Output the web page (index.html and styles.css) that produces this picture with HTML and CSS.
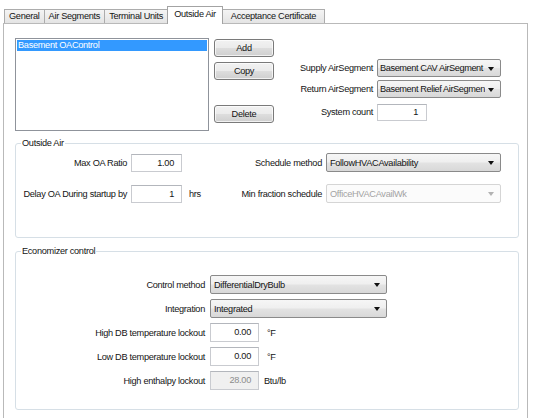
FILE: index.html
```html
<!DOCTYPE html>
<html>
<head>
<meta charset="utf-8">
<title>Outside Air</title>
<link rel="stylesheet" href="styles.css">
</head>
<body>
<div class="tabs">
  <div class="tab">General</div>
  <div class="tab">Air Segments</div>
  <div class="tab">Terminal Units</div>
  <div class="tab active">Outside Air</div>
  <div class="tab tab-wide">Acceptance Certificate</div>
</div>
<div class="page">
  <div class="top">
    <div class="list">
      <div class="item selected">Basement OAControl</div>
    </div>
    <div class="buttons">
      <button class="btn">Add</button>
      <button class="btn">Copy</button>
      <button class="btn btn-delete">Delete</button>
    </div>
    <div class="seg-form">
      <label class="lbl">Supply AirSegment</label>
      <div class="combo"><span class="combo-text">Basement CAV AirSegment</span><span class="arrow"></span></div>
      <label class="lbl">Return AirSegment</label>
      <div class="combo"><span class="combo-text">Basement Relief AirSegment</span><span class="arrow"></span></div>
      <label class="lbl lbl-count">System count</label>
      <div class="field field-count">1</div>
    </div>
  </div>

  <fieldset class="group group-oa">
    <legend>Outside Air</legend>
    <div class="oa-grid">
      <label class="lbl">Max OA Ratio</label>
      <div class="field">1.00</div>
      <span></span>
      <label class="lbl">Schedule method</label>
      <div class="combo"><span class="combo-text">FollowHVACAvailability</span><span class="arrow"></span></div>

      <label class="lbl">Delay OA During startup by</label>
      <div class="field">1</div>
      <span class="unit unit-hrs">hrs</span>
      <label class="lbl">Min fraction schedule</label>
      <div class="combo disabled"><span class="combo-text">OfficeHVACAvailWk</span><span class="arrow"></span></div>
    </div>
  </fieldset>

  <fieldset class="group group-econ">
    <legend>Economizer control</legend>
    <div class="econ-grid">
      <label class="lbl">Control method</label>
      <div class="ctl"><div class="combo combo-wide"><span class="combo-text">DifferentialDryBulb</span><span class="arrow"></span></div></div>

      <label class="lbl">Integration</label>
      <div class="ctl"><div class="combo combo-wide"><span class="combo-text">Integrated</span><span class="arrow"></span></div></div>

      <label class="lbl">High DB temperature lockout</label>
      <div class="ctl"><div class="field field-sm">0.00</div><span class="unit">&deg;F</span></div>

      <label class="lbl">Low DB temperature lockout</label>
      <div class="ctl"><div class="field field-sm">0.00</div><span class="unit">&deg;F</span></div>

      <label class="lbl">High enthalpy lockout</label>
      <div class="ctl"><div class="field field-sm field-disabled">28.00</div><span class="unit unit-btu">Btu/lb</span></div>
    </div>
  </fieldset>
</div>
</body>
</html>
```

FILE: styles.css
```css
* {
  box-sizing: border-box;
}

html, body {
  margin: 0;
  background: #ffffff;
}

body {
  font-family: "Liberation Sans", Arial, sans-serif;
  font-size: 9.2px;
  letter-spacing: -0.3px;
  color: #141414;
  overflow: hidden;
  height: 418px;
}

/* ---- tab strip ---- */
.tabs {
  display: flex;
  align-items: flex-end;
  height: 23px;
  padding-left: 4px;
}

.tab {
  height: 14px;
  line-height: 13px;
  padding: 0 4px;
  border: 1px solid #acacac;
  border-bottom: none;
  margin-left: -1px;
  background: linear-gradient(#f4f4f4, #e4e4e4);
  white-space: nowrap;
}

.tab:first-child {
  margin-left: 0;
}

.tab.active {
  position: relative;
  z-index: 1;
  height: 18px;
  margin-bottom: -1px;
  line-height: 15px;
  padding: 0 6px;
  background: #ffffff;
  border-color: #a3a3a3;
}

.tab.tab-wide {
  padding: 0 8px;
}

/* ---- tab page ---- */
.page {
  margin-left: 3px;
  width: 525px;
  height: 400px;
  border: 1px solid #b9b9b9;
  border-bottom: none;
  padding: 14px 0 0 11px;
}

.top {
  display: flex;
  height: 93px;
}

.list {
  width: 194px;
  height: 93px;
  border: 1px solid #8f939b;
  background: #ffffff;
  padding: 1px;
}

.item {
  height: 11px;
  line-height: 11px;
  padding-left: 1px;
  white-space: nowrap;
}

.item.selected {
  background: #3399ff;
  color: #ffffff;
}

.buttons {
  display: flex;
  flex-direction: column;
  width: 60px;
  margin-left: 5px;
  padding-top: 1px;
}

.btn {
  height: 18px;
  margin: 0 0 5px 0;
  padding: 0;
  font: inherit;
  letter-spacing: inherit;
  color: #141414;
  border: 1px solid #7a7a7a;
  border-radius: 3px;
  background: linear-gradient(#f2f2f2 0%, #ebebeb 48%, #dddddd 52%, #cfcfcf 100%);
  box-shadow: inset 0 0 0 1px rgba(255, 255, 255, 0.7);
}

.btn-delete {
  margin-top: 20px;
}

.seg-form {
  display: grid;
  grid-template-columns: 99px 124px;
  grid-auto-rows: 18px;
  column-gap: 4px;
  row-gap: 3px;
  align-items: center;
  padding-top: 21px;
}

.lbl {
  text-align: right;
  white-space: nowrap;
}

.lbl-count,
.field-count {
  margin-top: 4px;
}

/* ---- combo boxes ---- */
.combo {
  display: flex;
  align-items: center;
  height: 19px;
  border: 1px solid #8a8a8a;
  border-radius: 2px;
  background: linear-gradient(#f6f6f6 0%, #efefef 48%, #e3e3e3 52%, #d8d8d8 100%);
  padding-left: 3px;
  overflow: hidden;
}

.seg-form .combo {
  height: 18px;
  padding-left: 2px;
}

.seg-form .combo-text {
  letter-spacing: -0.4px;
}

.combo-text {
  flex: 1;
  overflow: hidden;
  white-space: nowrap;
}

.arrow {
  flex: none;
  width: 0;
  height: 0;
  margin: 1px 6px 0 3px;
  border-left: 3.5px solid transparent;
  border-right: 3.5px solid transparent;
  border-top: 4px solid #111111;
}

.combo.disabled {
  border-color: #d5d5d5;
  background: #fbfbfb;
  color: #a3a3a3;
}

.combo.disabled .arrow {
  border-top-color: #b2b2b2;
}

/* ---- text fields ---- */
.field {
  height: 18px;
  line-height: 16px;
  border: 1px solid #c9cbd0;
  border-top-color: #b3b6bc;
  background: #ffffff;
  text-align: right;
  padding-right: 7px;
}

.field-count {
  width: 50px;
  height: 17px;
  line-height: 15px;
  padding-right: 8px;
}

.field-disabled {
  background: #f0f0f0;
  color: #8c8c8c;
}

.unit {
  white-space: nowrap;
}

/* ---- group boxes ---- */
.group {
  margin: 0;
  padding: 0;
  min-width: 0;
  width: 504px;
  border: 1px solid #d6dfe6;
  border-radius: 3px;
}

.group legend {
  margin-left: 5px;
  padding: 0 1px;
  line-height: 11px;
}

.group-oa {
  margin-top: 7px;
  padding: 4px 17px 34px 0;
}

.oa-grid {
  display: grid;
  grid-template-columns: 111px 51px 1fr 100px 175px;
  grid-auto-rows: 19px;
  column-gap: 4px;
  row-gap: 12px;
  align-items: center;
}

.unit-hrs {
  padding-left: 3px;
}

.group-econ {
  margin-top: 8px;
  padding: 18px 0 19px 0;
}

.econ-grid {
  display: grid;
  grid-template-columns: 189px 300px;
  grid-auto-rows: 19px;
  column-gap: 5px;
  row-gap: 5px;
  align-items: center;
}

.ctl {
  display: flex;
  align-items: center;
  gap: 8px;
}

.combo-wide {
  width: 177px;
}

.field-sm {
  width: 49px;
  height: 19px;
  line-height: 17px;
}

.unit-btu {
  margin-left: -3px;
}
```
